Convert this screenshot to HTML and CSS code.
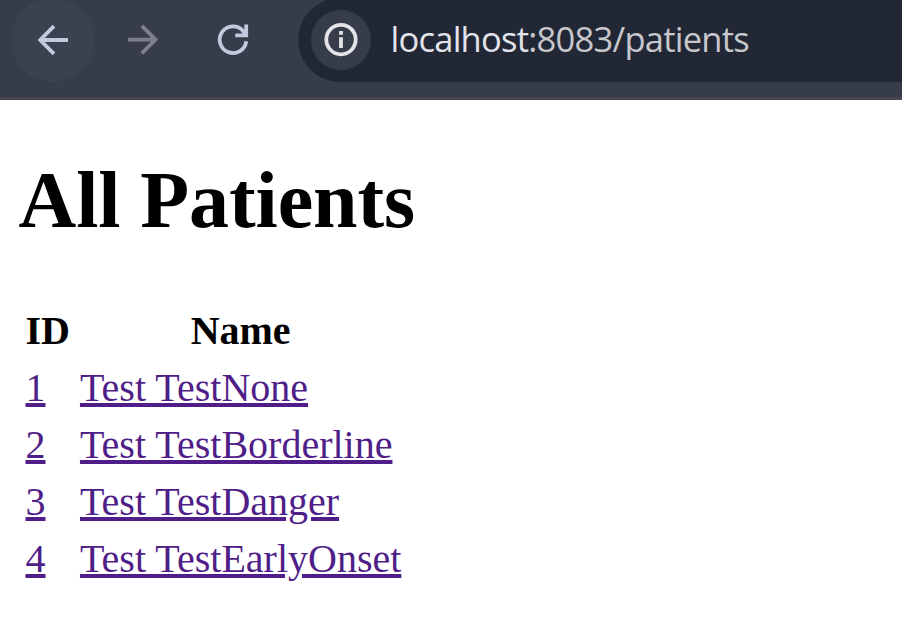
FILE: index.html
```html
<!DOCTYPE html>
<html lang="en">
<head>
<meta charset="utf-8">
<title>All Patients</title>
<link rel="stylesheet" href="styles.css">
</head>
<body>
<header class="toolbar">
  <span class="nav nav-back"><svg width="32" height="32" viewBox="0 0 32 32"><path d="M31 16H4M17 2.2L3.2 16L17 29.8"/></svg></span>
  <span class="nav nav-forward"><svg width="32" height="32" viewBox="0 0 32 32"><path d="M1 15.6H28M14.8 1.8L28.6 15.6L14.8 29.4"/></svg></span>
  <span class="nav nav-reload"><svg width="32" height="32" viewBox="0 0 32 32"><path d="M29.2 17.2A13.3 13.3 0 1 1 26.2 7.2L28.5 10.5M18.3 11.3H29.2V.5"/></svg></span>
  <div class="address">
    <span class="info"><svg width="34" height="34" viewBox="0 0 34 34"><circle cx="17" cy="16.6" r="14.7"/><path d="M17 14.3V25M17 8V11.8"/></svg></span>
    <span class="url"><span class="host">localhost</span>:8083/patients</span>
  </div>
</header>
<main>
  <h1>All Patients</h1>
  <table>
    <tr><th>ID</th><th>Name</th></tr>
    <tr><td><a href="#">1</a></td><td><a href="#">Test TestNone</a></td></tr>
    <tr><td><a href="#">2</a></td><td><a href="#">Test TestBorderline</a></td></tr>
    <tr><td><a href="#">3</a></td><td><a href="#">Test TestDanger</a></td></tr>
    <tr><td><a href="#">4</a></td><td><a href="#">Test TestEarlyOnset</a></td></tr>
  </table>
</main>
</body>
</html>
```
FILE: styles.css
```css
* { box-sizing: border-box; }
body {
  margin: 0;
  background: #fff;
  color: #000;
  font: 40px/46px "Liberation Serif", serif;
  overflow: hidden;
}
.toolbar {
  display: flex;
  height: 100px;
  background: #373c4b;
  border-bottom: 3px solid #48474c;
}
.nav {
  display: flex;
  align-items: center;
  justify-content: center;
  flex: none;
  width: 84px;
  height: 84px;
  margin-top: -2px;
  border-radius: 50%;
  color: #c3c8df;
}
.nav svg, .info svg {
  fill: none;
  stroke: currentColor;
  stroke-width: 3.8;
}
.nav-back { margin-left: 11px; background: #3c4150; }
.nav-forward { margin-left: 6px; color: #7d7f8a; }
.nav-reload { margin-left: 6px; }
.address {
  display: flex;
  align-items: center;
  flex: 1;
  height: 84px;
  margin: -2px 0 0 23px;
  padding-left: 12.5px;
  border-radius: 42px 0 0 42px;
  background: #212735;
}
.info {
  display: flex;
  align-items: center;
  justify-content: center;
  width: 60px;
  height: 60px;
  margin-top: -1px;
  border-radius: 50%;
  background: #373c4b;
  color: #e3e3e8;
}
.url {
  margin: -2px 0 0 20px;
  font: 34.5px/48px "Open Sans", "Noto Sans", sans-serif;
  letter-spacing: -0.75px;
  white-space: nowrap;
  color: #c7c7cc;
}
.host { color: #e3e3ea; }
main { padding: 0 20.5px; }
h1 {
  margin: 54px 0 54px -2px;
  font-size: 80px;
  line-height: 92px;
  letter-spacing: -0.1px;
}
table { border-spacing: 5px; }
th, td { padding: 3px 0; }
th:first-child, td:first-child { padding-right: 5px; }
a {
  color: #4f1e88;
  text-decoration-thickness: 4px;
  text-underline-offset: 2px;
}
```
